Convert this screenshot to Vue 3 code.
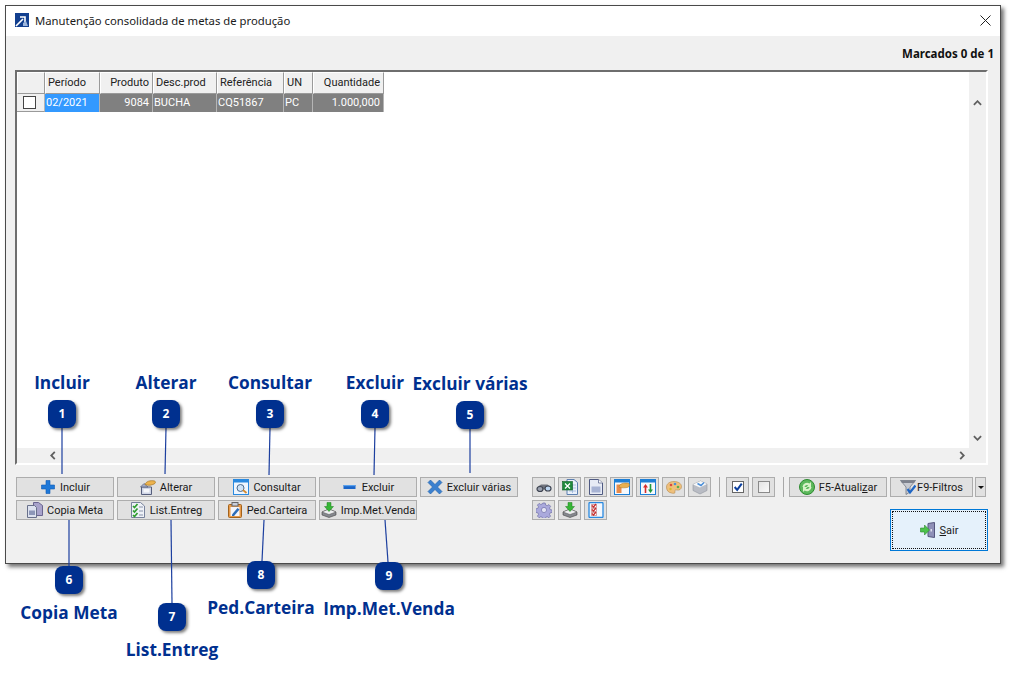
<script setup>
const icons = {
  plus: '<path d="M6 1.500h4v4.500h4.500v4H10v4.500H6V10H1.500V6H6z" fill="#1e78d8" stroke="#0f5bb5" stroke-width=".6"/>',
  minus: '<rect x="1.500" y="6" width="12" height="4" fill="#1b66c9"/><rect x="1.500" y="6" width="12" height="1.200" fill="#5aa2ee"/>',
  cross: '<path d="M1 3.500 3.500 1 8 5.500 12.500 1 15 3.500 10.500 8l4.500 4.500L12.500 15 8 10.500 3.500 15 1 12.500 5.500 8z" fill="#3b80cf" stroke="#1d5ca8" stroke-width=".6"/>',
  alter: '<path d="M1.500 8h10v7.500h-10z" fill="#cfd5e6" stroke="#565e7c"/><path d="M3.500 10h6v3.500h-6z" fill="#f5f6fa"/><path d="M.5 8 4 4.500 8 8z" fill="#a6aec8" stroke="#565e7c" stroke-width=".7"/><path d="M5 5.500c1-3 5-4.500 9.500-3.500 1.500.5 1 2.500-.5 3-2 1-5.500 2-9 .5z" fill="#edb34e" stroke="#a57420" stroke-width=".7"/>',
  search: '<rect x=".5" y=".5" width="15" height="15" fill="#eef6ff" stroke="#2a8ae0"/><rect x=".5" y=".5" width="15" height="3" fill="#2a8ae0"/><circle cx="7.500" cy="9" r="3.500" fill="#cfe4f7" stroke="#4b6a8d"/><path d="m10 11 3.500 3" stroke="#d38a30" stroke-width="1.800"/>',
  copy: '<path d="M6.500 .5h5l4 3v10h-9z" fill="#a8a3cb" stroke="#6a6590"/><path d="M.5 3.500h7l2 2v10h-9z" fill="#dde2ef" stroke="#68708a"/><path d="M2 8.500h6v4.500H2z" fill="#8d97b8"/>',
  list: '<path d="M1.500 .5h9l4 3.500v11.500h-13z" fill="#eef1f7" stroke="#78829c"/><path d="m3 4 1.500 1.500L7.500 2M3 8.500 4.500 10l3-3.500M3 13l1.500 1.500 3-3.500" fill="none" stroke="#2f9e2f" stroke-width="1.700"/><path d="M9 5h4M9 9h4M9 13h4" stroke="#8a93aa"/>',
  clip: '<rect x="1.500" y="2.500" width="13" height="13" rx="1" fill="#e89b4a" stroke="#a2621c"/><rect x="3.500" y="5" width="9" height="9" fill="#f3f5fa"/><rect x="5" y=".5" width="6" height="3.500" fill="#c9cfdb" stroke="#666"/><path d="m5 12.500 5.500-6.500 2 1.500-5.500 6.500H5z" fill="#2b6cb8"/>',
  imp: '<path d="M1 10 8 7l7 3v3l-7 2.500L1 13z" fill="#85888e" stroke="#444" stroke-width=".6"/><path d="M1 10 8 12.500l7-2.500L8 7z" fill="#eeeff1" stroke="#555" stroke-width=".5"/><path d="M6 .5h4v4h2.500L8 9.500 3.500 4.500H6z" fill="#36b636" stroke="#1f7f1f" stroke-width=".5"/>',
  binoc: '<path d="M2 7.500 5 5.500h3l3.500 0 2.500 2-3 3h-6z" fill="#70747e"/><ellipse cx="4" cy="10" rx="3" ry="2.500" fill="#9aa0ae" stroke="#3d4350" stroke-width="1.200"/><ellipse cx="12" cy="9.500" rx="3" ry="2.500" fill="#bcd6f2" stroke="#3d4350" stroke-width="1.200"/>',
  excel: '<path d="M5 .5h7l3.500 3v12H5z" fill="#e9f0fa" stroke="#5c7fb0"/><path d="M7 6h7M7 9h7M7 12h7M10.500 5v9" stroke="#92aed4" stroke-width=".7"/><rect x=".5" y="2.500" width="10" height="8.500" fill="#1f8a3c" stroke="#146128" stroke-width=".6"/><path d="m3 4.500 5 5m0-5-5 5" stroke="#fff" stroke-width="1.300"/>',
  doc: '<path d="M1.500 .5h9l4 3.500v11.500h-13z" fill="#e7ebf5" stroke="#4f5a82"/><rect x="3.500" y="7.500" width="9" height="6" fill="#a6b2d3"/><path d="M10.500 .5V4h4" fill="#fff" stroke="#4f5a82" stroke-width=".7"/>',
  calc: '<rect x=".5" y=".5" width="15" height="15" fill="#f6f9fd" stroke="#1d7fd6"/><rect x=".5" y=".5" width="15" height="3" fill="#1d7fd6"/><path d="M2.500 5.500h5v8.500h-5z" fill="#e98b4b"/><path d="M5 7c2-3 6-3.500 10-2.500 1 1 .3 3.500-1 3.800C11 9 8 9 5.500 8.500z" fill="#e8b050" stroke="#a57420" stroke-width=".5"/>',
  sort: '<rect x=".5" y=".5" width="15" height="15" fill="#f6f9fd" stroke="#1d7fd6"/><rect x=".5" y=".5" width="15" height="3" fill="#1d7fd6"/><path d="M5.500 5 3 8.500h1.700V14h1.600V8.500H8z" fill="#d62c2c"/><path d="M10.500 14 8 10.500h1.700V5h1.600v5.500H13z" fill="#1f9a3c"/>',
  palette: '<path d="M.5 8c0-3.500 3.500-5.500 7.500-5.500s7.500 2 7.500 5-2.500 4-4.500 3.500-2.500.5-2 2-2 1.500-3.500 1C2 13.500.5 11 .5 8z" fill="#efc07c" stroke="#b58a4e" stroke-width=".6"/><circle cx="5" cy="6" r="1.300" fill="#d94b3f"/><circle cx="9" cy="5" r="1.300" fill="#4a8ed8"/><circle cx="12" cy="8" r="1.300" fill="#5cae4a"/><circle cx="4.500" cy="10" r="1.200" fill="#d8b72c"/>',
  box: '<path d="M1 5.500 8.500 2 15 5v6.500L8 15l-7-3.500z" fill="#b9bcc4" stroke="#9095a0" stroke-width=".6"/><path d="M1 5.500 8 8.500 15 5 8.500 2z" fill="#f6f7f8"/><path d="M5.500 4.500 9 6.500l3-3" fill="none" stroke="#4a8ed8" stroke-width="1.500"/>',
  gear: '<path d="M6.800 1h2.400l.4 2 1.600.7 1.700-1.100 1.700 1.700-1.100 1.700.7 1.600 2 .4v2.400l-2 .4-.7 1.600 1.100 1.700-1.700 1.700-1.700-1.100-1.600.7-.4 2H6.800l-.4-2-1.600-.7-1.700 1.100-1.700-1.700 1.100-1.700-.7-1.600-2-.4V6.800l2-.4.7-1.600-1.100-1.700 1.700-1.700 1.700 1.100 1.600-.7z" fill="#aaa9dc" stroke="#6f6ea8" stroke-width=".7"/><circle cx="8" cy="8" r="2.600" fill="#e4e4f4" stroke="#6f6ea8" stroke-width=".7"/>',
  check: '<rect x="1" y=".5" width="14" height="15" rx="1" fill="#f4f7fc" stroke="#2a8ae0" stroke-width="1.300"/><path d="M3.500 2.500h5v3h-5zM3.500 6.500h5v3h-5zM3.500 10.500h5v3h-5z" fill="#fff" stroke="#b04040" stroke-width=".5"/><path d="m4 3.500 1.500 1.500 2.500-3M4 7.500 5.500 9l2.500-3M4 11.500 5.500 13l2.500-3" fill="none" stroke="#c92b2b" stroke-width="1.200"/>',
  refresh: '<circle cx="8" cy="8" r="7.500" fill="#5cb85c" stroke="#2d8a30"/><path d="M3.500 8a4.500 4.500 0 0 1 7-3.500L12 3v5H7.500l1.800-1.700A2.500 2.500 0 0 0 5.500 8z" fill="#d8f2c8"/><path d="M12.500 8a4.500 4.500 0 0 1-7 3.500L4 13V8h4.500l-1.800 1.700A2.500 2.500 0 0 0 10.500 8z" fill="#d8f2c8"/>',
  filter: '<path d="M.5 1.500h15L10 8v5l-4 2.500V8z" fill="#c7cad1" stroke="#666b75" stroke-width=".7"/><path d="M.5 1.500h15l-1.500 2.500H2z" fill="#7d818c"/><path d="m7.500 10 2.500 3.500L15.500 6.500" fill="none" stroke="#1e66c5" stroke-width="2.200"/>',
  exit: '<path d="M8 1.500 14.500 .5v15L8 14.500z" fill="#8f90b8" stroke="#55567e"/><rect x="10.500" y="7" width="1.500" height="2.500" fill="#dfe0ee"/><path d="M.5 6h4V3L9.500 8l-5 5v-3h-4z" fill="#4cc24c" stroke="#2a8a2a" stroke-width=".6"/>'
}

const mainButtons = [
  { label: 'Incluir', icon: 'plus' },
  { label: 'Alterar', icon: 'alter' },
  { label: 'Consultar', icon: 'search' },
  { label: 'Excluir', icon: 'minus' },
  { label: 'Excluir várias', icon: 'cross' },
  { label: 'Copia Meta', icon: 'copy' },
  { label: 'List.Entreg', icon: 'list' },
  { label: 'Ped.Carteira', icon: 'clip' },
  { label: 'Imp.Met.Venda', icon: 'imp' }
]

const smallButtons = ['binoc', 'excel', 'doc', 'calc', 'sort', 'palette', 'box', 'gear', 'imp', 'check']

const columns = [
  { label: 'Período', cls: '' },
  { label: 'Produto', cls: 'right' },
  { label: 'Desc.prod', cls: '' },
  { label: 'Referência', cls: '' },
  { label: 'UN', cls: '' },
  { label: 'Quantidade', cls: 'right' }
]

const row = [
  { text: '02/2021', cls: 'current' },
  { text: '9084', cls: 'right' },
  { text: 'BUCHA', cls: '' },
  { text: 'CQ51867', cls: '' },
  { text: 'PC', cls: '' },
  { text: '1.000,000', cls: 'right' }
]

const callouts = [
  { n: 1, label: 'Incluir', x: 62, by: 400, lx: 62, ly: 383, line: [62, 428, 62, 474] },
  { n: 2, label: 'Alterar', x: 166, by: 400, lx: 166, ly: 383, line: [166, 428, 165, 474] },
  { n: 3, label: 'Consultar', x: 270, by: 400, lx: 270, ly: 383, line: [270, 428, 269, 475] },
  { n: 4, label: 'Excluir', x: 375, by: 400, lx: 375, ly: 383, line: [375, 428, 374, 475] },
  { n: 5, label: 'Excluir várias', x: 470, by: 401, lx: 470, ly: 384, line: [470, 429, 470, 473] },
  { n: 6, label: 'Copia Meta', x: 69, by: 566, lx: 69, ly: 613, line: [69, 520, 69, 566] },
  { n: 7, label: 'List.Entreg', x: 172, by: 603, lx: 172, ly: 650, line: [171, 520, 172, 603] },
  { n: 8, label: 'Ped.Carteira', x: 261, by: 561, lx: 261, ly: 608, line: [264, 520, 262, 561] },
  { n: 9, label: 'Imp.Met.Venda', x: 389, by: 562, lx: 389, ly: 609, line: [385, 520, 388, 562] }
]
</script>

<template>
  <div class="page">
    <div class="window">
      <header class="titlebar">
        <svg class="appicon" viewBox="0 0 14 14">
          <rect width="14" height="14" fill="#123f8f" />
          <path d="M1 13 8 6M5 4h5v5" fill="none" stroke="#fff" stroke-width="1.600" />
          <path d="M8 13V10l3-2 2 5z" fill="#9db6dc" />
        </svg>
        <span class="title">Manutenção consolidada de metas de produção</span>
        <svg class="close" viewBox="0 0 11 11">
          <path d="m.5.5 10 10m0-10-10 10" stroke="#222" stroke-width="1" fill="none" />
        </svg>
      </header>

      <div class="body">
        <div class="marks">Marcados 0 de 1</div>

        <div class="grid">
          <div class="grid-main">
            <div class="grid-content">
              <div class="table">
                <div class="head corner"></div>
                <div v-for="c in columns" :key="c.label" class="head" :class="c.cls">{{ c.label }}</div>
                <div class="cell checkcell"><span class="box"></span></div>
                <div v-for="c in row" :key="c.text" class="cell" :class="c.cls">{{ c.text }}</div>
              </div>
            </div>
            <div class="vbar">
              <svg class="arrow" viewBox="0 0 10 6"><path d="m1 5 4-4 4 4" fill="none" stroke="#606060" stroke-width="2" /></svg>
              <svg class="arrow" viewBox="0 0 10 6"><path d="m1 1 4 4 4-4" fill="none" stroke="#606060" stroke-width="2" /></svg>
            </div>
          </div>
          <div class="hbar">
            <svg class="arrow-h" viewBox="0 0 6 10"><path d="M5 1 1 5l4 4" fill="none" stroke="#606060" stroke-width="2" /></svg>
            <svg class="arrow-h" viewBox="0 0 6 10"><path d="m1 1 4 4-4 4" fill="none" stroke="#606060" stroke-width="2" /></svg>
          </div>
        </div>

        <div class="toolbar">
          <div class="main-buttons">
            <button v-for="b in mainButtons" :key="b.label" class="btn">
              <svg class="ic" viewBox="0 0 16 16" v-html="icons[b.icon]"></svg>
              <span>{{ b.label }}</span>
            </button>
          </div>

          <div class="small-buttons">
            <button v-for="(s, i) in smallButtons" :key="i" class="btn small">
              <svg class="ic" viewBox="0 0 16 16" v-html="icons[s]"></svg>
            </button>
          </div>

          <div class="right-col">
            <div class="right-row">
              <span class="sep"></span>
              <button class="btn small check-a">
                <span class="tick on">
                  <svg viewBox="0 0 12 12"><path d="m2 6 3 3.500L10.500 2" fill="none" stroke="#0c3f9e" stroke-width="2.400" /></svg>
                </span>
              </button>
              <button class="btn small"><span class="tick"></span></button>
              <span class="sep second"></span>
              <button class="btn wide">
                <svg class="ic" viewBox="0 0 16 16" v-html="icons.refresh"></svg>
                <span>F5-Atuali<u>z</u>ar</span>
              </button>
              <button class="btn filter">
                <svg class="ic" viewBox="0 0 16 16" v-html="icons.filter"></svg>
                <span>F9-Filtros</span>
              </button>
              <button class="btn drop"><span class="caret"></span></button>
            </div>
            <button class="sair">
              <span class="sair-inner">
                <svg class="ic" viewBox="0 0 16 16" v-html="icons.exit"></svg>
                <span><u>S</u>air</span>
              </span>
            </button>
          </div>
        </div>
      </div>
    </div>

    <svg class="lines" viewBox="0 0 1024 678">
      <line v-for="c in callouts" :key="c.n" :x1="c.line[0]" :y1="c.line[1]" :x2="c.line[2]" :y2="c.line[3]" stroke="#1c3f9f" stroke-width="1.200" />
    </svg>
    <template v-for="c in callouts" :key="c.n">
      <div class="badge" :style="{ left: c.x - 14 + 'px', top: c.by + 'px' }">{{ c.n }}</div>
      <div class="callout-label" :style="{ left: c.lx + 'px', top: c.ly + 'px' }">{{ c.label }}</div>
    </template>
  </div>
</template>

<style>
html, body { margin: 0; background: #fff; }
</style>

<style scoped>
.page {
  position: relative;
  width: 1024px;
  height: 678px;
  overflow: hidden;
  background: #fff;
  font-family: "Roboto", "Noto Sans", sans-serif;
  font-size: 11px;
  color: #1a1a1a;
}
.window {
  box-sizing: border-box;
  width: 996px;
  height: 559px;
  position: absolute;
  left: 5px;
  top: 5px;
  border: 1px solid #4a4a4a;
  background: #f0f0f0;
  box-shadow: 3px 3px 4px rgba(0, 0, 0, .55);
  display: flex;
  flex-direction: column;
}
.titlebar {
  height: 30px;
  flex: none;
  background: #fff;
  display: flex;
  align-items: center;
  padding: 0 9px 2px 9px;
  box-sizing: border-box;
}
.appicon { width: 14px; height: 14px; }
.title { margin-left: 6px; font-family: "Noto Sans", sans-serif; font-size: 11.300px; color: #1a1a1a; }
.close { width: 11px; height: 11px; margin-left: auto; }
.body { flex: 1; display: flex; flex-direction: column; }
.marks {
  height: 34px;
  flex: none;
  box-sizing: border-box;
  padding: 10px 6px 0 0;
  text-align: right;
  font-family: "Noto Sans", sans-serif;
  font-weight: 700;
  font-size: 11.500px;
  line-height: 16px;
  color: #111;
}
.grid {
  box-sizing: border-box;
  margin-left: 9px;
  width: 973px;
  height: 395px;
  flex: none;
  border-left: 2px solid #6e6e6e;
  border-top: 2px solid #6e6e6e;
  border-right: 2px solid #fff;
  border-bottom: 2px solid #fff;
  background: #fff;
  display: flex;
  flex-direction: column;
}
.grid-main { flex: 1; display: flex; min-height: 0; }
.grid-content { flex: 1; }
.table {
  display: grid;
  grid-template-columns: 28px 55px 53px 64px 67px 29px 71px;
  grid-template-rows: 22px 18px;
  width: 367px;
}
.head {
  box-sizing: border-box;
  background: #f0f0f0;
  border-top: 1px solid #fff;
  border-left: 1px solid #fff;
  border-right: 1px solid #9a9a9a;
  border-bottom: 1px solid #9a9a9a;
  padding: 0 2px 0 2px;
  line-height: 19px;
  white-space: nowrap;
  color: #222;
}
.head.right { text-align: right; padding-right: 3px; }
.cell {
  box-sizing: border-box;
  background: #808080;
  color: #fff;
  border-right: 1px solid #b5b5b5;
  padding: 0 2px 0 1px;
  line-height: 18px;
  white-space: nowrap;
}
.cell.right { text-align: right; padding-right: 3px; }
.cell.current { background: #3399ff; }
.checkcell {
  background: #f0f0f0;
  border-bottom: 1px solid #9a9a9a;
  display: flex;
  align-items: center;
  padding: 0 0 0 6px;
}
.box {
  display: block;
  width: 11px;
  height: 11px;
  border: 1px solid #444;
  background: #fff;
}
.vbar {
  width: 17px;
  flex: none;
  background: #f0f0f0;
  display: flex;
  flex-direction: column;
  justify-content: space-between;
  align-items: center;
  padding: 28px 0 7px;
  box-sizing: border-box;
}
.arrow { width: 9px; height: 6px; }
.hbar {
  height: 15px;
  flex: none;
  background: #f0f0f0;
  display: flex;
  justify-content: space-between;
  align-items: center;
  padding: 0 21px 0 33px;
  box-sizing: border-box;
}
.arrow-h { width: 6px; height: 9px; }
.toolbar {
  display: flex;
  align-items: flex-start;
  margin: 12px 0 0 10px;
}
.main-buttons {
  display: grid;
  grid-template-columns: repeat(5, 98px);
  grid-auto-rows: 20px;
  gap: 3px;
  width: 502px;
  flex: none;
}
.btn {
  box-sizing: border-box;
  height: 20px;
  margin: 0;
  padding: 0;
  border: 1px solid #adadad;
  background: #e1e1e1;
  display: flex;
  align-items: center;
  justify-content: center;
  gap: 4px;
  font: inherit;
  color: #1a1a1a;
  white-space: nowrap;
}
.ic { width: 16px; height: 16px; flex: none; }
.small-buttons {
  display: grid;
  grid-template-columns: repeat(7, 23px);
  grid-auto-rows: 20px;
  gap: 3px;
  margin-left: 14px;
  width: 179px;
  flex: none;
}
.small { width: 23px; flex: none; }
.right-col {
  margin-left: 8px;
  width: 269px;
  flex: none;
  display: flex;
  flex-direction: column;
  align-items: flex-end;
}
.right-row {
  width: 269px;
  display: flex;
  align-items: center;
  height: 20px;
}
.sep { width: 1px; height: 20px; background: #a8a8a8; margin-right: 6px; flex: none; }
.sep.second { margin-left: 8px; margin-right: 5px; }
.check-a { margin-right: 3px; }
.tick {
  display: block;
  box-sizing: border-box;
  width: 12px;
  height: 12px;
  border: 1px solid #8a8a8a;
  background: linear-gradient(135deg, #e4e4e4, #fafafa);
}
.tick.on { border-color: #666; background: #fff; }
.tick svg { display: block; width: 10px; height: 10px; }
.wide { width: 98px; flex: none; margin-right: 3px; }
.filter { width: 83px; flex: none; margin-right: 2px; gap: 1px; }
.drop { width: 11px; flex: none; }
.caret {
  width: 0;
  height: 0;
  border-left: 3.500px solid transparent;
  border-right: 3.500px solid transparent;
  border-top: 3.500px solid #111;
}
.sair {
  box-sizing: border-box;
  width: 98px;
  height: 42px;
  margin: 12px 0 0;
  padding: 1px;
  border: 1px solid #0078d7;
  background: #e5f1fb;
  font: inherit;
  color: #1a1a1a;
}
.sair-inner {
  box-sizing: border-box;
  height: 100%;
  display: flex;
  align-items: center;
  justify-content: center;
  gap: 4px;
  outline: 1px dotted #111;
  outline-offset: -1px;
}
.lines {
  position: absolute;
  left: 0;
  top: 0;
  width: 1024px;
  height: 678px;
  pointer-events: none;
}
.badge {
  position: absolute;
  width: 28px;
  height: 28px;
  border-radius: 8px;
  background: #00308f;
  box-shadow: 2px 2px 3px rgba(0, 0, 0, .5);
  color: #fff;
  font-family: "Open Sans", sans-serif;
  font-weight: 700;
  font-size: 12px;
  line-height: 28px;
  text-align: center;
}
.callout-label {
  position: absolute;
  transform: translate(-50%, -50%);
  font-family: "Open Sans", sans-serif;
  font-weight: 700;
  font-size: 17.300px;
  line-height: 20px;
  color: #00308f;
  white-space: nowrap;
}
</style>
